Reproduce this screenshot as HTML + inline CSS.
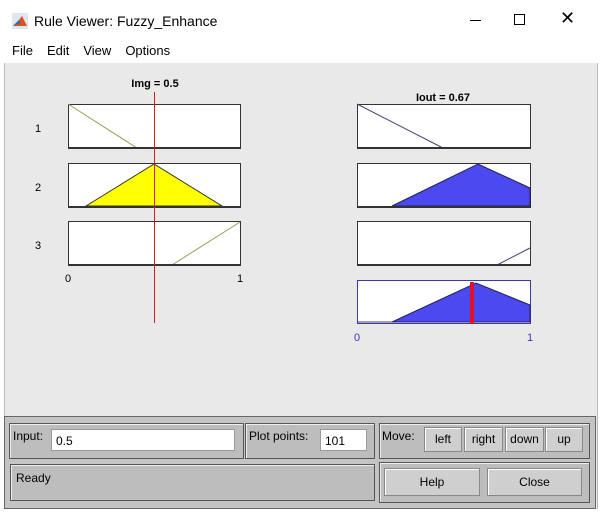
<!DOCTYPE html>
<html><head><style>
body{margin:0;width:600px;height:513px;background:#fff;font-family:"Liberation Sans",sans-serif;position:relative;overflow:hidden}
.a{position:absolute}
.pn{position:absolute;border:1px solid #555;background:#bdbdbd;box-shadow:inset 1px 1px 0 #eee}
.bt{position:absolute;background:#cfcfcf;border:1px solid #888;box-shadow:inset 1px 1px 0 #fff;font-size:12px;text-align:center;color:#000}
.tf{position:absolute;background:#fff;border:1px solid #999;font-size:12px;padding-left:4px;box-sizing:border-box}
.l{font-size:12px;position:absolute;color:#000}
</style></head><body>
<div class="a" style="left:0;top:0;width:600px;height:40px;background:#fff"></div>
<svg class="a" style="left:12px;top:13px" width="16" height="16"><rect width="16" height="16" fill="#dfe6ee"/><path d="M1 13 L7 7 L10 3 L15 13 Z" fill="#e0521b"/><path d="M1 13 L7 7 L9 10 Z" fill="#2a6fb0"/></svg>
<div class="a" style="left:34px;top:13px;font-size:14px">Rule Viewer: Fuzzy_Enhance</div>
<div class="a" style="left:470px;top:20px;width:11px;height:1px;background:#000"></div>
<div class="a" style="left:514px;top:14px;width:9px;height:9px;border:1px solid #000"></div>
<div class="a" style="left:560px;top:8px;font-size:18px">✕</div>
<div class="a" style="left:12px;top:43px;font-size:13px"><span>File</span><span style="margin-left:14px">Edit</span><span style="margin-left:14px">View</span><span style="margin-left:14px">Options</span></div>
<div class="a" style="left:4px;top:63px;width:592px;height:446px;background:#e9e9e9;border-left:1px solid #bbb;border-right:1px solid #bbb"></div>
<svg class="a" style="left:0;top:0" width="600" height="420" font-family="Liberation Sans" font-size="11">
<text x="155" y="87" text-anchor="middle" font-weight="bold">Img = 0.5</text>
<text x="443" y="101" text-anchor="middle" font-weight="bold">Iout = 0.67</text>
<text x="38" y="132" text-anchor="middle">1</text><text x="38" y="191" text-anchor="middle">2</text><text x="38" y="249" text-anchor="middle">3</text>
<g fill="#fff" stroke="#333"><rect x="68.5" y="104.5" width="172" height="44"/><rect x="68.5" y="163.5" width="172" height="44"/><rect x="68.5" y="221.5" width="172" height="44"/>
<rect x="357.5" y="104.5" width="173" height="44"/><rect x="357.5" y="163.5" width="173" height="44"/><rect x="357.5" y="221.5" width="173" height="44"/></g>
<rect x="357.5" y="280.5" width="173" height="43" fill="#fff" stroke="#3a3ab0"/>
<line x1="68" y1="104" x2="137" y2="148" stroke="#9a9a55"/>
<polygon points="86,206 154,164 222,206" fill="#ffff00" stroke="#333"/>
<line x1="172" y1="265" x2="240" y2="222" stroke="#9a9a55"/>
<line x1="357" y1="104" x2="443" y2="148" stroke="#44447a"/>
<polygon points="392,206 478,164 530,188 530,206" fill="#4a4af0" stroke="#222255"/>
<line x1="497" y1="265" x2="530" y2="248" stroke="#44447a"/>
<polygon points="392,322 476,283 530,305 530,322" fill="#4a4af0" stroke="#222255"/>
<line x1="357" y1="322" x2="392" y2="322" stroke="#444"/>
<g stroke="#333" stroke-width="2"><line x1="68" y1="148" x2="241" y2="148"/><line x1="68" y1="207" x2="241" y2="207"/><line x1="68" y1="265" x2="241" y2="265"/><line x1="357" y1="148" x2="531" y2="148"/><line x1="357" y1="207" x2="531" y2="207"/><line x1="357" y1="265" x2="531" y2="265"/></g>
<line x1="154.5" y1="92" x2="154.5" y2="323" stroke="#d02020"/>
<rect x="470" y="282" width="4" height="42" fill="#e0102a"/>
<text x="68" y="282" text-anchor="middle">0</text><text x="240" y="282" text-anchor="middle">1</text>
<text x="357" y="341" text-anchor="middle" fill="#3a3ab0">0</text><text x="530" y="341" text-anchor="middle" fill="#3a3ab0">1</text>
</svg>
<div class="a" style="left:4px;top:416px;width:590px;height:91px;background:#c4c4c4;border:1px solid #666"></div>
<div class="pn" style="left:9px;top:423px;width:233px;height:34px"></div>
<div class="l" style="left:13px;top:429px">Input:</div>
<div class="tf" style="left:51px;top:429px;width:184px;height:22px;line-height:22px">0.5</div>
<div class="pn" style="left:245px;top:423px;width:128px;height:34px"></div>
<div class="l" style="left:249px;top:429px">Plot points:</div>
<div class="tf" style="left:320px;top:429px;width:47px;height:22px;line-height:22px">101</div>
<div class="pn" style="left:379px;top:423px;width:209px;height:34px"></div>
<div class="l" style="left:382px;top:429px">Move:</div>
<div class="bt" style="left:424px;top:427px;width:36px;height:23px;line-height:23px">left</div>
<div class="bt" style="left:464px;top:427px;width:37px;height:23px;line-height:23px">right</div>
<div class="bt" style="left:505px;top:427px;width:37px;height:23px;line-height:23px">down</div>
<div class="bt" style="left:545px;top:427px;width:36px;height:23px;line-height:23px">up</div>
<div class="pn" style="left:10px;top:464px;width:363px;height:35px"></div>
<div class="l" style="left:16px;top:471px">Ready</div>
<div class="pn" style="left:379px;top:462px;width:209px;height:39px"></div>
<div class="bt" style="left:384px;top:468px;width:94px;height:26px;line-height:26px">Help</div>
<div class="bt" style="left:487px;top:468px;width:93px;height:26px;line-height:26px">Close</div>
</body></html>
